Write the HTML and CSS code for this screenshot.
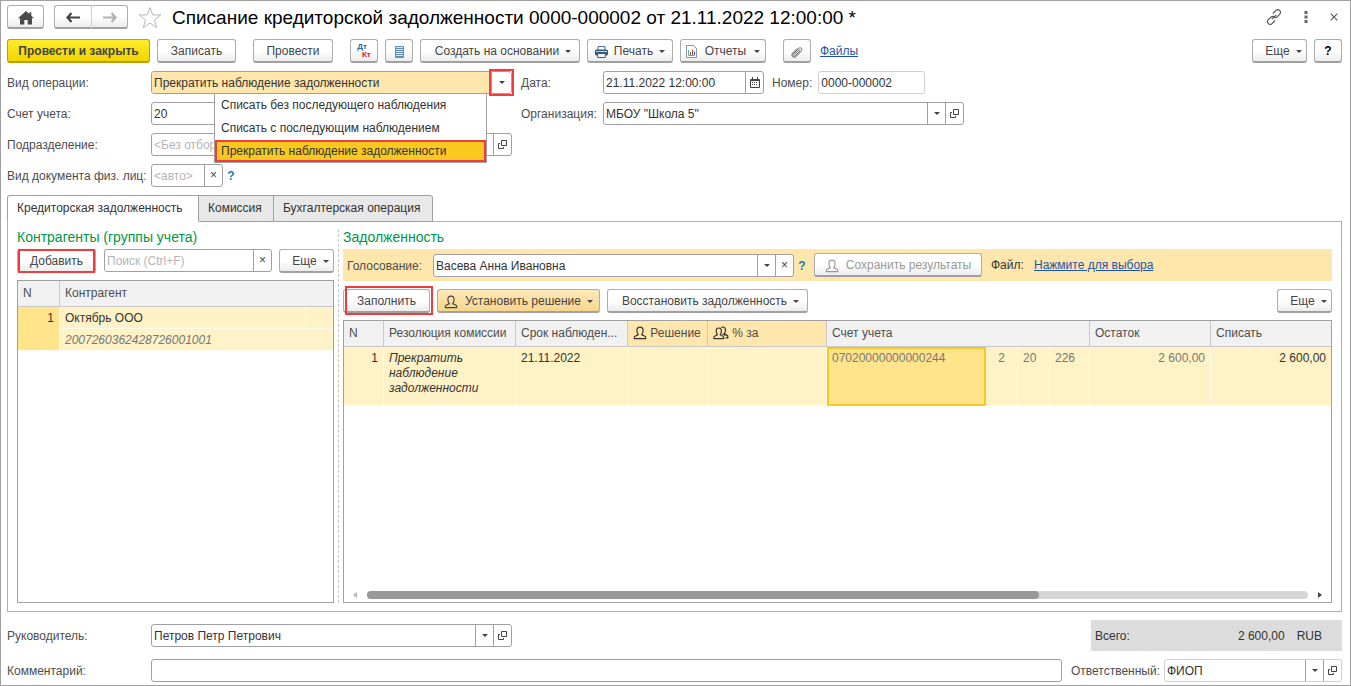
FILE: index.html
```html
<!DOCTYPE html>
<html lang="ru">
<head>
<meta charset="utf-8">
<title>Списание кредиторской задолженности</title>
<link rel="stylesheet" href="styles.css">
</head>
<body>
<svg class="sprite" aria-hidden="true">
  <symbol id="open" viewBox="0 0 11 11"><path d="M4.500 1.500h5v5h-5zM3 4.500H1.500v5h5V8" fill="none" stroke="#444"/></symbol>
  <symbol id="person" viewBox="0 0 14 14"><path d="M5.400 8.600C4.300 7.300 3.900 5.800 3.900 4.400 3.900 2.300 5.100 1.100 7 1.100s3.100 1.200 3.100 3.300c0 1.400-.4 2.900-1.500 4.200L12 10.200c.5.200.7.600.7 1.200v1.200H1.300v-1.200c0-.6.2-1 .7-1.200z" fill="none" stroke="currentColor" stroke-width="1.200" stroke-linejoin="round"/></symbol>
  <symbol id="people" viewBox="0 0 16 14"><path d="M4.400 8.700C3.500 7.400 3.200 6.200 3.200 4.900 3.200 3 4.200 2 5.800 2s2.600 1 2.600 2.900c0 1.300-.3 2.500-1.200 3.800l2.900 1.500c.4.200.6.600.6 1.100v1.300H.9v-1.300c0-.5.2-.9.600-1.100zM8 1.600C8.500 1.200 9.100 1 9.800 1c1.700 0 2.700 1.200 2.700 3 0 1.300-.4 2.600-1.200 3.800l2.900 1.600c.4.200.6.600.6 1.100v1.400h-2.300M9.500 7.800l3 1.700" fill="none" stroke="currentColor" stroke-width="1.200" stroke-linejoin="round"/></symbol>
</svg>
<main class="window">
  <header class="titlebar">
    <button class="btn icon-btn home" aria-label="Начало"><svg width="16" height="14" viewBox="0 0 16 14"><path d="M8 0 0 7.300h2V13.500h4.300V9h3.400v4.500H14V7.300h2L13.300 4.800V1.200h-2V3z" fill="#4a4a4a"/></svg></button>
    <div class="nav">
      <button class="btn" aria-label="Назад"><svg width="14" height="11" viewBox="0 0 14 11"><path d="M5.500 1 1.500 5.500l4 4.500M1.500 5.500H14" fill="none" stroke="#444" stroke-width="2.200"/></svg></button>
      <button class="btn" aria-label="Вперед"><svg width="14" height="11" viewBox="0 0 14 11"><path d="m8.500 1 4 4.500-4 4.500M12.500 5.500H0" fill="none" stroke="#b0b0b0" stroke-width="2.200"/></svg></button>
    </div>
    <button class="plain" aria-label="В избранное"><svg width="24" height="23" viewBox="0 0 24 23"><path d="m12 1.500 2.700 7.400 8.100.1-6.400 4.900 2.300 7.700-6.700-4.500-6.700 4.500 2.300-7.700L1.200 9l8.100-.1z" fill="none" stroke="#b4b8be"/></svg></button>
    <h1>Списание кредиторской задолженности 0000-000002 от 21.11.2022 12:00:00 *</h1>
    <div class="window-tools">
      <button class="plain" aria-label="Ссылка"><svg width="16" height="16" viewBox="0 0 16 16"><path d="m7 4.500 2.700-2.800c1.200-1.200 2.900-1.200 3.900-.3 1.200 1 1.200 2.800.1 3.900L11.300 7.700c-1.100 1.100-2.600 1.200-3.700.4M9 11.500l-2.700 2.800c-1.200 1.200-2.900 1.200-3.900.3-1.200-1-1.200-2.800-.1-3.900l2.400-2.400c1.100-1.100 2.600-1.200 3.700-.4M5.800 10.200l4.400-4.400" fill="none" stroke="#555" stroke-width="1.200"/></svg></button>
      <button class="plain" aria-label="Меню"><svg width="4" height="12" viewBox="0 0 4 12"><path d="M.5 0h3v3h-3zM.5 4.500h3v3h-3zM.5 9h3v3h-3z" fill="#666"/></svg></button>
      <button class="plain" aria-label="Закрыть"><svg width="8" height="8" viewBox="0 0 8 8"><path d="m.7.7 6.600 6.600M7.300.7.7 7.300" stroke="#555" stroke-width="1.100"/></svg></button>
    </div>
  </header>

  <div class="toolbar">
    <button class="btn primary">Провести и закрыть</button>
    <button class="btn save">Записать</button>
    <button class="btn post">Провести</button>
    <button class="btn icon-btn dtkt" aria-label="Дт Кт"><span class="dt">Дт</span><span class="kt">Кт</span></button>
    <button class="btn icon-btn" aria-label="Реестр"><svg width="9" height="12" viewBox="0 0 9 12"><path d="M.5.500h8v11h-8z" fill="#d6e6f2" stroke="#5d8fb8"/><path d="M1 2.500h7M1 4.500h7M1 6.500h7M1 8.500h7M1 10.500h7" stroke="#5d8fb8"/></svg></button>
    <button class="btn create">Создать на основании<i class="caret"></i></button>
    <button class="btn print"><svg width="13" height="12" viewBox="0 0 13 12"><path d="M3 4V.600h7V4" fill="#fff" stroke="#496780"/><rect y="3.500" width="13" height="6" rx="1.500" fill="#355a78"/><path d="M1 5.500h11" stroke="#b9d2e5"/><path d="M2.700 7.500h7.600v4H2.700z" fill="#fff" stroke="#355a78"/></svg>Печать<i class="caret"></i></button>
    <button class="btn reports"><svg width="11" height="13" viewBox="0 0 11 13"><path d="M.5.500h7l3 3v9H.5z" fill="#fff" stroke="#8796a3"/><path d="M2.500 5v5.500h6" fill="none" stroke="#8796a3"/><path d="M4.500 10V7" stroke="#3c8a50"/><path d="M6.500 10V5" stroke="#d33"/><path d="M8.500 10V6.500" stroke="#36c"/></svg>Отчеты<i class="caret"></i></button>
    <button class="btn icon-btn clip" aria-label="Прикрепить"><svg width="12" height="12" viewBox="0 0 12 12"><path d="M3.300 8.700 7.600 4.300c.8-.8 1.700.1 1 .9L4.300 9.700c-1.400 1.400-3.300-.4-1.900-1.900l5-5.200C9.500.5 12.200 3 10.200 5.200l-5 5.200C2.800 12.700-.6 9.700 1.600 7.200l4.500-4.700" fill="none" stroke="#666"/></svg></button>
    <a href="#files">Файлы</a>
    <button class="btn more push">Еще<i class="caret"></i></button>
    <button class="btn icon-btn help">?</button>
  </div>

  <section class="form">
    <label for="op">Вид операции:</label>
    <div class="field combo">
      <input id="op" class="beige" value="Прекратить наблюдение задолженности"><button class="addon marked" aria-label="Выбрать"><i class="caret"></i></button>
      <ul class="menu">
        <li><button>Списать без последующего наблюдения</button></li>
        <li><button>Списать с последующим наблюдением</button></li>
        <li><button class="chosen">Прекратить наблюдение задолженности</button></li>
      </ul>
    </div>
    <label for="date" class="second">Дата:</label>
    <div class="line">
      <div class="field date"><input id="date" value="21.11.2022 12:00:00"><button class="addon" aria-label="Календарь"><svg width="10" height="11" viewBox="0 0 10 11"><path d="M.5 2.500h9v8h-9zM.5 3.500h9M2.500 0v3M7.500 0v3" fill="none" stroke="#444"/><path d="M2 5.500h6M2 7.500h6" stroke="#444" stroke-dasharray="1 1"/></svg></button></div>
      <label for="num" class="num-label">Номер:</label>
      <div class="field num soft"><input id="num" value="0000-000002" readonly></div>
    </div>

    <label for="acc">Счет учета:</label>
    <div class="field acc"><input id="acc" value="20"></div>
    <label for="org" class="second">Организация:</label>
    <div class="field combo"><input id="org" value="МБОУ &quot;Школа 5&quot;"><button class="addon" aria-label="Выбрать"><i class="caret"></i></button><button class="addon" aria-label="Открыть"><svg width="11" height="11"><use href="#open"/></svg></button></div>

    <label for="dep" class="first">Подразделение:</label>
    <div class="field combo"><input id="dep" placeholder="&lt;Без отбора&gt;"><button class="addon" aria-label="Открыть"><svg width="11" height="11"><use href="#open"/></svg></button></div>

    <label for="doc" class="first">Вид документа физ. лиц:</label>
    <div class="line"><div class="field auto"><input id="doc" placeholder="&lt;авто&gt;"><button class="addon" aria-label="Очистить">×</button></div><button class="hint">?</button></div>
  </section>

  <nav class="tabs" role="tablist">
    <button class="tab active" role="tab" aria-selected="true">Кредиторская задолженность</button>
    <button class="tab short" role="tab">Комиссия</button>
    <button class="tab long" role="tab">Бухгалтерская операция</button>
  </nav>

  <section class="panel">
    <div class="left">
      <h2>Контрагенты (группы учета)</h2>
      <div class="bar">
        <button class="btn add marked">Добавить</button>
        <div class="field grow"><input aria-label="Поиск" placeholder="Поиск (Ctrl+F)"><button class="addon" aria-label="Очистить">×</button></div>
        <button class="btn more">Еще<i class="caret"></i></button>
      </div>
      <div class="grid-box">
        <table>
          <colgroup><col class="c-n-left"><col><col class="c-tail"></colgroup>
          <thead><tr><th>N</th><th colspan="2">Контрагент</th></tr></thead>
          <tbody>
            <tr><td rowspan="2" class="rownum">1</td><td>Октябрь ООО</td><td></td></tr>
            <tr><td colspan="2" class="code">2007260362428726001001</td></tr>
          </tbody>
        </table>
      </div>
    </div>
    <div class="splitter"></div>
    <div class="right">
      <h2>Задолженность</h2>
      <div class="vote">
        <label for="vote">Голосование:</label>
        <div class="field vote-field"><input id="vote" value="Васева Анна Ивановна"><button class="addon" aria-label="Выбрать"><i class="caret"></i></button><button class="addon" aria-label="Очистить">×</button></div>
        <button class="hint">?</button>
        <button class="btn store" disabled><svg width="14" height="14"><use href="#person"/></svg>Сохранить результаты</button>
        <span class="file">Файл:</span>
        <a href="#pick">Нажмите для выбора</a>
      </div>
      <div class="bar actions">
        <button class="btn fill marked">Заполнить</button>
        <button class="btn decide"><svg width="14" height="14"><use href="#person"/></svg>Установить решение<i class="caret"></i></button>
        <button class="btn restore">Восстановить задолженность<i class="caret"></i></button>
        <button class="btn more push">Еще<i class="caret"></i></button>
      </div>
      <div class="grid-box">
        <table class="debts">
          <colgroup><col class="c-n"><col class="c-res"><col class="c-term"><col class="c-dec"><col class="c-pct"><col class="c-acc"><col class="c-s"><col class="c-s"><col class="c-m"><col class="c-rest"><col></colgroup>
          <thead><tr><th>N</th><th>Резолюция комиссии</th><th>Срок наблюден...</th><th class="gold"><svg width="14" height="14"><use href="#person"/></svg> Решение</th><th class="gold"><svg width="16" height="14"><use href="#people"/></svg> % за</th><th colspan="4">Счет учета</th><th>Остаток</th><th>Списать</th></tr></thead>
          <tbody><tr><td class="right-text">1</td><td class="res">Прекратить наблюдение задолженности</td><td>21.11.2022</td><td></td><td></td><td class="current">07020000000000244</td><td class="dim center-text">2</td><td class="dim">20</td><td class="dim">226</td><td class="dim right-text">2 600,00</td><td class="right-text">2 600,00</td></tr></tbody>
        </table>
        <div class="scroll"><i class="arrow back"></i><div class="track"><div class="thumb"></div></div><i class="arrow next"></i></div>
      </div>
    </div>
  </section>

  <footer class="footer">
    <label for="head">Руководитель:</label>
    <div class="line">
      <div class="field head"><input id="head" value="Петров Петр Петрович"><button class="addon" aria-label="Выбрать"><i class="caret"></i></button><button class="addon" aria-label="Открыть"><svg width="11" height="11"><use href="#open"/></svg></button></div>
      <div class="total push"><span>Всего:</span><output>2 600,00</output><span>RUB</span></div>
    </div>
    <label for="note">Комментарий:</label>
    <div class="line">
      <div class="field grow"><input id="note"></div>
      <label for="resp" class="resp-label">Ответственный:</label>
      <div class="field resp soft"><input id="resp" value="ФИОП"><button class="addon" aria-label="Выбрать"><i class="caret"></i></button><button class="addon" aria-label="Открыть"><svg width="11" height="11"><use href="#open"/></svg></button></div>
    </div>
  </footer>
</main>
</body>
</html>
```

FILE: styles.css
```css
* { box-sizing: border-box; }
body { margin: 0; font: 12px/15px "Liberation Sans", Arial, sans-serif; color: #333; background: #fff; }
button, input { font: inherit; color: inherit; }
button { padding: 0; margin: 0; }
svg { display: block; flex: none; }
a { color: #1c55ae; }
label { color: #4d4d4d; white-space: nowrap; padding-top: 2px; }
.sprite { position: absolute; width: 0; height: 0; }
.push { margin-left: auto; }

.window { min-height: 100vh; display: flex; flex-direction: column; border: 1px solid #a0a0a0; padding: 4px 8px 3px 6px; }

.btn { flex: none; height: 24px; padding-top: 2px; display: flex; align-items: center; justify-content: center; border: 1px solid #adadad; border-bottom: 2px solid #a0a0a0; border-radius: 3px; background: linear-gradient(#fff 50%, #ececec); color: #444; white-space: nowrap; }
.plain { border: 0; background: none; display: flex; }
.icon-btn { width: 28px; }
.caret { flex: none; width: 0; height: 0; border: 3px solid transparent; border-top-color: #444; border-bottom: 0; }
.btn .caret { margin-left: 6px; }
.marked { position: relative; z-index: 1; }
.marked::after { content: ""; position: absolute; inset: -1px 0 -2px; border: 2px solid #f03c3c; pointer-events: none; }
.addon.marked::after { inset: -3px; }
.fill.marked::after { inset: -4px -4px -4px 1px; }

.titlebar { display: flex; align-items: center; height: 24px; }
.home { width: 37px; }
.nav { display: flex; margin: 0 10px; }
.nav .btn { width: 37px; }
.nav .btn:first-child { border-radius: 3px 0 0 3px; border-right: 0; }
.nav .btn:last-child { border-left-color: #d0d0d0; border-radius: 0 3px 3px 0; }
h1 { flex: 1; margin: 0 0 0 10px; padding-top: 1px; font-size: 19px; line-height: 24px; font-weight: 400; color: #000; }
.window-tools { display: flex; align-items: center; gap: 22px; margin-right: 4px; }

.toolbar { display: flex; align-items: center; gap: 7px; margin: 10px 0 8px; }
.primary { width: 143px; font-weight: 700; border-color: #b8a000; background: linear-gradient(#ffec2b, #f2d500); }
.save { width: 79px; }
.post { width: 80px; margin: 0 10px; }
.create { width: 160px; padding-left: 6px; }
.print { width: 86px; gap: 6px; }
.reports { width: 86px; gap: 8px; }
.print .caret, .reports .caret { margin-left: 0; }
.clip { margin: 0 2px 0 10px; }
.more { width: 55px; padding-left: 8px; }
.help { font-weight: 700; color: #000; }
.dtkt { font-size: 8px; font-weight: 700; line-height: 8px; padding: 0; }
.dt { color: #24699f; padding-bottom: 8px; }
.kt { color: #d32020; padding-top: 8px; margin-left: -5px; }

.field { display: flex; height: 23px; min-width: 0; border: 1px solid #a0a0a0; border-radius: 3px; background: #fff; position: relative; }
.grow { flex: 1; }
.field input { flex: 1; min-width: 0; border: 0; padding: 2px 2px 0; background: none; border-radius: 3px; outline: 0; }
.field input::placeholder { color: #b5b5b5; opacity: 1; }
.field .beige { background: #ffe6ac; border-radius: 2px 0 0 2px; }
.soft { border-color: #d0d0d0; }
.addon { width: 18px; flex: none; border: 0; border-left: 1px solid #a0a0a0; background: none; display: flex; align-items: center; justify-content: center; color: #444; }
.addon.marked { width: 20px; }
.hint { border: 0; background: none; width: 16px; padding-top: 2px; color: #1b7ab8; font-weight: 700; }
.line { display: flex; align-items: center; }

.form { display: grid; grid-template-columns: 144px 361px 91px 361px; row-gap: 8px; align-items: center; }
.second { padding-left: 9px; }
.first { grid-column: 1; }
.date { width: 161px; }
.num-label { margin: 0 6px 0 8px; }
.num { width: 107px; }
.acc { width: 200px; }
.auto { width: 72px; }

.menu { position: absolute; z-index: 5; top: 22px; left: 62px; width: 273px; margin: 0; padding: 0; list-style: none; background: #fff; border: 1px solid #a0a0a0; border-top: 0; }
.menu button { display: block; width: 100%; height: 22px; padding: 0 5px; text-align: left; border: 1px solid transparent; background: none; }
.menu li:not(:last-child) { padding-bottom: 1px; }
.menu .chosen { border: 2px solid #f03c3c; background: #fac81e; padding: 0 4px; }

.tabs { display: flex; margin-top: 8px; position: relative; z-index: 2; }
.tab { height: 27px; margin-bottom: -1px; padding: 0 9px; text-align: left; border: 1px solid #a0a0a0; border-left: 0; background: #e8e8e8; }
.tab.active { width: 192px; border-left: 1px solid #a0a0a0; border-bottom-color: #fff; background: #fff; border-radius: 3px 0 0 0; }
.tab.short { width: 75px; }
.tab.long { width: 159px; border-radius: 0 3px 0 0; }

.panel { flex: 1; display: flex; border: 1px solid #b0b0b0; padding: 7px 9px 8px; }
.left { width: 317px; display: flex; flex-direction: column; }
.right { flex: 1; min-width: 0; display: flex; flex-direction: column; }
.splitter { width: 5px; margin-right: 4px; border-right: 1px dashed #c4c4c4; }
h2 { margin: 0 0 4px; font-size: 14px; line-height: 16px; font-weight: 400; color: #009646; }
.bar { display: flex; gap: 7px; }
.add { width: 79px; margin-right: 1px; }
.grid-box { flex: 1; display: flex; flex-direction: column; border: 1px solid #a0a0a0; margin-top: 7px; }
.vote { display: flex; align-items: center; height: 32px; padding: 0 4px; background: #ffe6ac; }
.vote label { width: 86px; }
.vote a, .file { padding-top: 1px; }
.vote-field { width: 361px; }
.store { width: 168px; gap: 7px; margin: 0 9px 0 4px; }
.btn:disabled { color: #999; }
.file { width: 43px; }
.actions { margin-top: 8px; }
.fill { width: 87px; }
.decide { width: 163px; background: linear-gradient(#ffe9b9, #f6d68d); }
.decide svg { margin-right: 7px; }
.restore { width: 201px; padding-left: 6px; }

table { width: 100%; table-layout: fixed; border-collapse: separate; border-spacing: 0; }
th { height: 26px; padding: 0 5px; text-align: left; font-weight: 400; color: #4d4d4d; background: #f1f1f1; border-right: 1px solid #c8c8c8; border-bottom: 1px solid #c8c8c8; white-space: nowrap; overflow: hidden; }
th:last-child, td:last-child { border-right: 0; }
th svg { display: inline-block; vertical-align: -3px; color: #333; }
.gold { background: #ffe6ac; }
td { height: 22px; padding: 4px 5px 2px; vertical-align: top; background: #fff2c6; border-right: 1px solid #fffbee; border-bottom: 1px solid #fffbee; }
.rownum { background: #ffe48c; text-align: right; }
.code, .res { font-style: italic; }
.code { color: #777; }
.right-text { text-align: right; }
.center-text { text-align: center; }
.dim, .current { color: #777; }
.debts td { height: 59px; }
.debts .current { background: #ffe48c; border: 2px solid #fac81e; padding: 2px 3px; }
.c-n-left { width: 42px; }
.c-tail { width: 27px; }
.c-n { width: 40px; }
.c-res { width: 132px; }
.c-term { width: 112px; }
.c-dec { width: 80px; }
.c-pct { width: 119px; }
.c-acc { width: 159px; }
.c-s { width: 32px; }
.c-m { width: 40px; }
.c-rest { width: 121px; }

.scroll { margin-top: auto; height: 15px; padding: 0 9px; display: flex; align-items: center; gap: 10px; }
.track { flex: 1; height: 8px; border-radius: 4px; background: #d6d6d6; }
.thumb { width: 71.4%; height: 8px; border-radius: 4px; background: #999; }
.arrow { width: 0; height: 0; border: 3px solid transparent; }
.arrow.back { border-left: 0; border-right: 4px solid #b5b5b5; }
.arrow.next { border-right: 0; border-left: 4px solid #444; }

.footer { display: grid; grid-template-columns: 144px 1fr; row-gap: 8px; align-items: center; margin-top: 8px; }
.head { width: 361px; }
.total { width: 251px; height: 31px; display: flex; align-items: center; padding: 1px 20px 0 4px; background: #dcdcdc; }
.total output { margin: 0 12px 0 auto; }
.resp-label { margin: 0 4px 0 9px; }
.resp { width: 178px; }
```
